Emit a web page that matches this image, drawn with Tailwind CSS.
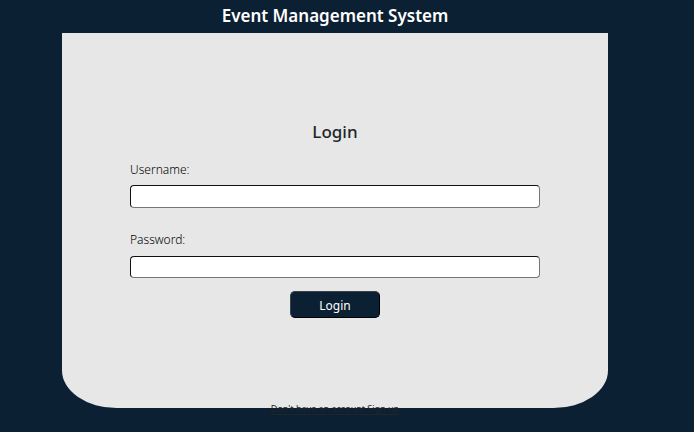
<!DOCTYPE html>
<html lang="en">
<head>
<meta charset="utf-8">
<meta name="viewport" content="width=device-width, initial-scale=1">
<title>Event Management System</title>
<script src="https://cdn.jsdelivr.net/npm/@tailwindcss/browser@4"></script>
</head>
<body class="min-h-screen bg-[#0c2033] pr-[86px] pl-[62px] font-['Noto_Sans','Open_Sans',sans-serif] text-[#212529]">
  <header class="pt-1 pb-[5px] text-center">
    <h1 class="text-[17px] leading-6 font-semibold text-white">Event Management System</h1>
  </header>
  <main class="flex flex-col rounded-b-[10%] bg-[#e7e7e7] px-[68px] pt-[86px]">
    <form class="flex flex-col">
      <h2 class="pt-px text-center text-[17px] leading-6 font-medium">Login</h2>
      <label for="username" class="mt-4 text-[12px] leading-5 font-light text-black">Username:</label>
      <input id="username" type="text" class="mt-[5px] h-[23px] rounded-[4px] border border-t-[#101010] border-r-[#767676] border-b-[#767676] border-l-[#101010] bg-white px-2 text-[12px]">
      <label for="password" class="mt-[22px] text-[12px] leading-5 font-light text-black">Password:</label>
      <input id="password" type="password" class="mt-[6px] h-[22px] rounded-[4px] border border-t-[#101010] border-r-[#767676] border-b-[#767676] border-l-[#101010] bg-white px-2 text-[12px]">
      <button type="submit" class="mt-[13px] h-[27px] w-[90px] self-center rounded-[5px] border border-t-[#3a4248] border-r-black border-b-black border-l-[#3a4248] bg-[#0c2033] pt-[2px] text-[12px] leading-5 text-white">Login</button>
    </form>
    <p class="-mb-[9px] pt-[83px] text-center text-[9px] leading-4">
      <a href="#signup" class="underline underline-offset-2">Don't have an account Sign up</a>
    </p>
  </main>
</body>
</html>
